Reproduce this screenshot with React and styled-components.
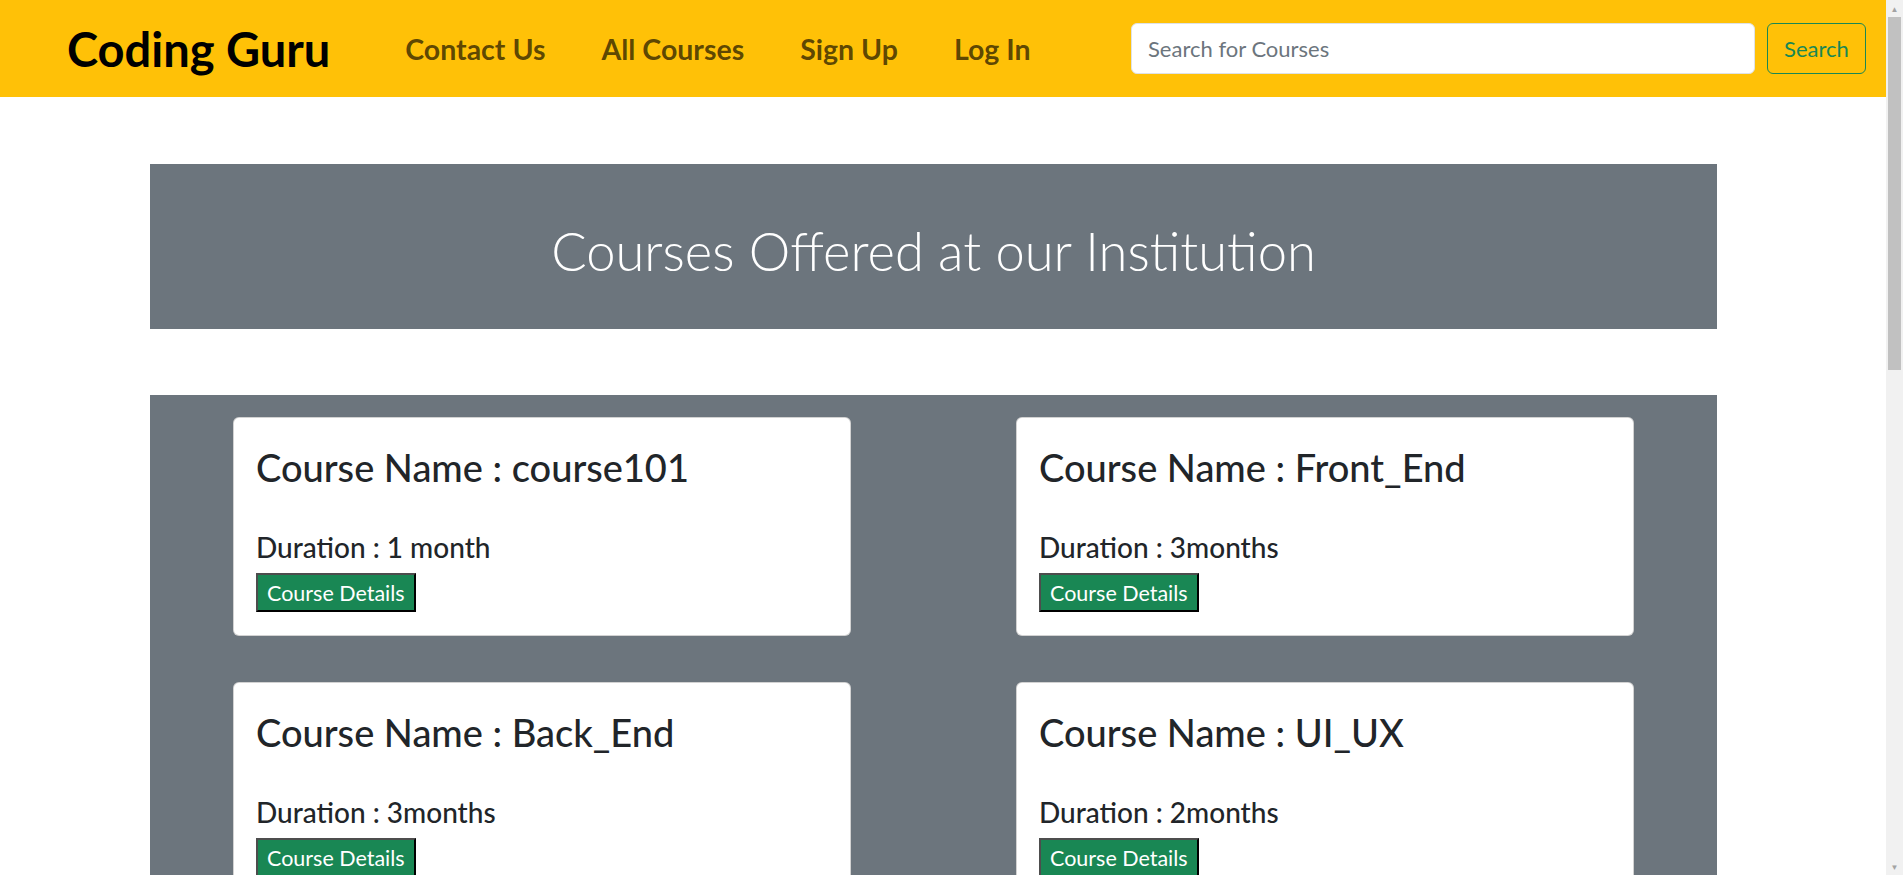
import React from 'react';
import styled, { createGlobalStyle } from 'styled-components';

const GlobalStyle = createGlobalStyle`
  * {
    box-sizing: border-box;
  }
  body {
    margin: 0;
    background: #fff;
    color: #212529;
    font-family: Lato, "Open Sans", sans-serif;
  }
`;

// the reference has the browser's scrollbar, so leave room for it
const Page = styled.div`
  margin-right: 17px;
`;

const ScrollBar = styled.div`
  background: #f1f1f1;
  display: flex;
  flex-direction: column;
  height: 100vh;
  position: fixed;
  right: 0;
  top: 0;
  width: 17px;
`;

const ScrollArrow = styled.div`
  align-items: center;
  color: #a3a3a3;
  display: flex;
  font-size: 8px;
  height: 17px;
  justify-content: center;
`;

const ScrollThumb = styled.div`
  background: #c1c1c1;
  height: 353px;
  margin: 0 2px;
`;

const ScrollSpacer = styled.div`
  flex: 1;
`;

const NavBar = styled.nav`
  align-items: center;
  background-color: #ffc107;
  display: flex;
  height: 97px;
  padding: 0 20px 0 67px;
`;

const Brand = styled.a`
  color: #000;
  font-size: 47px;
  font-weight: 700;
  margin-right: 47px;
  text-decoration: none;
`;

const NavLink = styled.a`
  color: rgba(0, 0, 0, 0.65);
  font-size: 28.5px;
  font-weight: 700;
  padding: 0 28px;
  text-decoration: none;
`;

const SearchForm = styled.form`
  display: flex;
  gap: 12px;
  margin-left: auto;
`;

const SearchInput = styled.input`
  background: #fff;
  border: 1px solid #dee2e6;
  border-radius: 6px;
  color: #212529;
  font-family: inherit;
  font-size: 22px;
  height: 51px;
  padding: 0 16px;
  width: 624px;
  &::placeholder {
    color: #6c757d;
  }
`;

const SearchButton = styled.button`
  background: transparent;
  border: 1px solid #198754;
  border-radius: 6px;
  color: #198754;
  font-family: inherit;
  font-size: 22px;
  height: 51px;
  width: 99px;
`;

const Main = styled.main`
  padding: 67px 169px 0 150px;
`;

const Banner = styled.div`
  align-items: center;
  background-color: #6c757d;
  display: flex;
  height: 165px;
  justify-content: center;
  padding-top: 8px;
`;

const BannerTitle = styled.h1`
  color: #fff;
  font-size: 52.5px;
  font-weight: 300;
  margin: 0;
`;

const CourseGrid = styled.section`
  background-color: #6c757d;
  display: grid;
  gap: 46px 165px;
  grid-template-columns: repeat(2, 1fr);
  margin-top: 66px;
  padding: 22px 83px;
`;

const Card = styled.div`
  background: #fff;
  border: 1px solid rgba(0, 0, 0, 0.175);
  border-radius: 6px;
  display: flex;
  flex-direction: column;
  height: 219px;
  padding: 23px 22px;
`;

const CourseName = styled.h2`
  font-size: 38px;
  font-weight: 500;
  line-height: 1.2;
  margin: 4px 0 auto;
`;

const Duration = styled.h3`
  font-size: 28px;
  font-weight: 500;
  line-height: 1.2;
  margin: 0 0 8px;
`;

const DetailsButton = styled.button`
  align-self: flex-start;
  background-color: #198754;
  border-style: solid;
  border-width: 2px;
  border-color: #4d4d4d #000 #000 #4d4d4d;
  color: #fff;
  font-family: inherit;
  font-size: 21.5px;
  height: 39px;
  padding: 0 9px;
`;

const courses = [
  { name: 'course101', duration: '1 month' },
  { name: 'Front_End', duration: '3months' },
  { name: 'Back_End', duration: '3months' },
  { name: 'UI_UX', duration: '2months' },
];

const App = () => {
  return (
    <>
      <GlobalStyle />
      <Page>
        <NavBar>
          <Brand href="#">Coding Guru</Brand>
          <NavLink href="#">Contact Us</NavLink>
          <NavLink href="#">All Courses</NavLink>
          <NavLink href="#">Sign Up</NavLink>
          <NavLink href="#">Log In</NavLink>
          <SearchForm onSubmit={(e) => e.preventDefault()}>
            <SearchInput type="search" placeholder="Search for Courses" />
            <SearchButton type="submit">Search</SearchButton>
          </SearchForm>
        </NavBar>
        <Main>
          <Banner>
            <BannerTitle>Courses Offered at our Institution</BannerTitle>
          </Banner>
          <CourseGrid>
            {courses.map((course) => (
              <Card key={course.name}>
                <CourseName>Course Name : {course.name}</CourseName>
                <Duration>Duration : {course.duration}</Duration>
                <DetailsButton>Course Details</DetailsButton>
              </Card>
            ))}
          </CourseGrid>
        </Main>
      </Page>
      <ScrollBar>
        <ScrollArrow>▲</ScrollArrow>
        <ScrollThumb />
        <ScrollSpacer />
        <ScrollArrow>▼</ScrollArrow>
      </ScrollBar>
    </>
  );
};

export default App;
